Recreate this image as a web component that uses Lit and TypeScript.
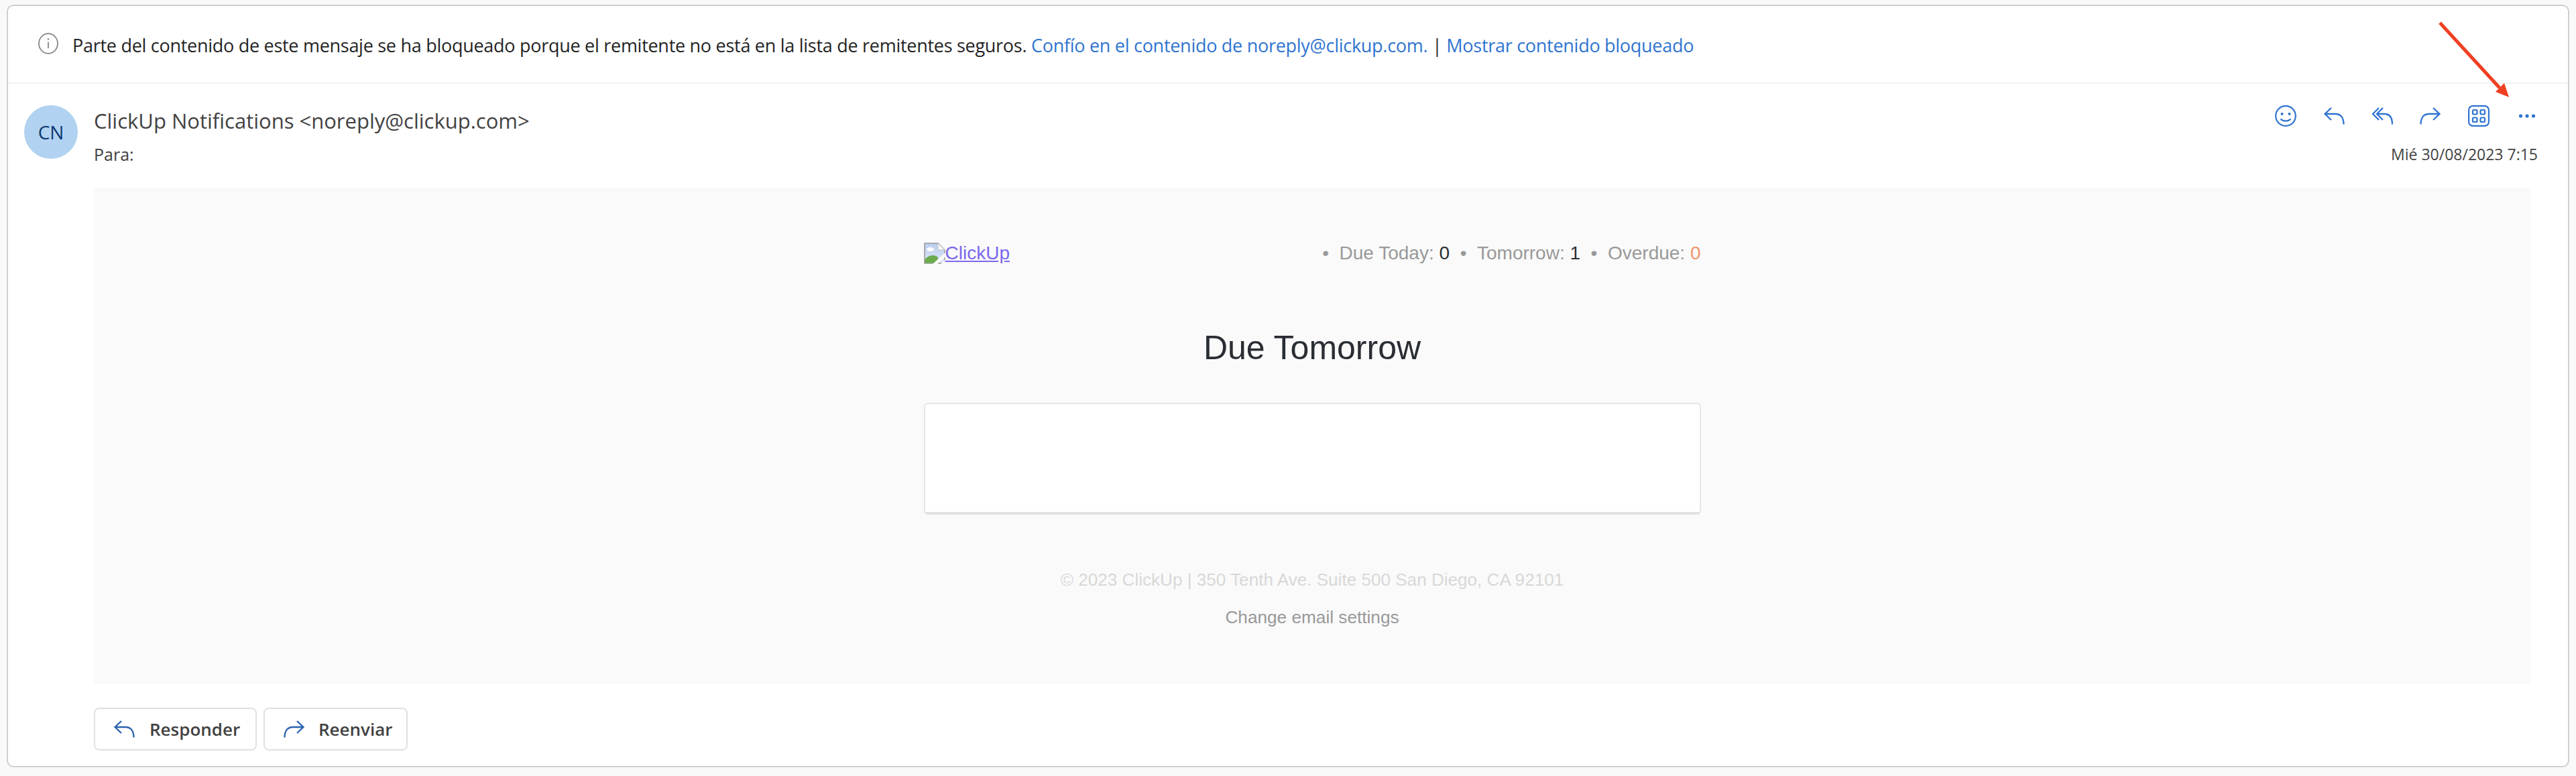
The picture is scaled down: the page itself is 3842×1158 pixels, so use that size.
import { LitElement, html, css, svg } from "lit";
import { customElement } from "lit/decorators.js";

const replyPath = svg`<path d="M12 1 L2.5 10 L12 19 M2.5 10 H18 C25.5 10 30.5 15 30.5 25.5" fill="none" stroke="currentColor" stroke-width="2.3"/>`;
const forwardPath = svg`<path d="M20 1 L29.5 10 L20 19 M29.5 10 H14 C6.5 10 1.5 15 1.5 25.5" fill="none" stroke="currentColor" stroke-width="2.3"/>`;

@customElement("app-root")
export class AppRoot extends LitElement {
  static styles = css`
    :host { display: block; position: relative; width: 3842px; height: 1158px; box-sizing: border-box; padding: 7px 10px 13px 10px; background: #f9f9f9; font-family: "Open Sans", sans-serif; }
    .card { box-sizing: border-box; height: 100%; background: #fff; border: 2px solid #cfcfcf; border-radius: 10px; display: flex; flex-direction: column; }
    .banner { height: 116px; box-sizing: border-box; border-bottom: 2px solid #f0f0f0; display: flex; align-items: center; padding-left: 45px; gap: 21px; font-size: 27px; letter-spacing: -0.28px; color: #242424; white-space: nowrap; flex: none; }
    .banner svg { flex: none; margin-top: -2px; }
    .banner span { margin-top: 3px; }
    .banner a { color: #2f74d0; }
    .head { height: 155px; flex: none; display: flex; padding: 32px 0 0 24px; box-sizing: border-box; }
    .avatar { width: 80px; height: 80px; border-radius: 50%; background: #b1d2f0; color: #0e3a70; display: flex; align-items: center; justify-content: center; font-size: 28px; flex: none; }
    .who { margin-left: 24px; flex: 1; display: flex; flex-direction: column; color: #424242; }
    .sender { font-size: 31px; line-height: 44px; margin-top: 1px; }
    .to { font-size: 25px; line-height: 34px; margin-top: 11px; }
    .side { display: flex; flex-direction: column; align-items: flex-end; margin-right: 45px; }
    .icons { display: flex; align-items: center; gap: 40px; height: 32px; color: #2f74d0; margin-right: 0; }
    .icons svg { display: block; flex: none; }
    .date { font-size: 23px; line-height: 32px; color: #424242; margin-top: 25px; }
    .mail { margin: 0 56px 0 128px; height: 740px; flex: none; background: #fafafa; display: flex; flex-direction: column; align-items: center; font-family: "Liberation Sans", Arial, sans-serif; }
    .inner { width: 1159px; display: flex; flex-direction: column; }
    .top { display: flex; justify-content: space-between; align-items: center; margin-top: 78px; height: 40px; }
    .logo { display: flex; align-items: flex-end; color: #7b68ee; font-size: 28px; line-height: 32px; text-decoration: underline; }
    .stats { font-size: 28px; color: #999; white-space: nowrap; }
    .stats b { font-weight: 400; color: #2a2e34; }
    .stats i { font-style: normal; color: #f0946b; }
    h1 { font-size: 50px; line-height: 60px; font-weight: 400; color: #2a2e34; text-align: center; margin: 91px 0 0; }
    .box { margin-top: 52px; height: 167px; box-sizing: border-box; background: #fff; border: 2px solid #e6e6e6; border-bottom: 4px solid #e2e0e0; border-radius: 6px; }
    .copy { margin-top: 82px; text-align: center; font-size: 26.1px; line-height: 30px; color: #d8d8d8; white-space: nowrap; }
    .settings { margin-top: 26px; text-align: center; font-size: 26.2px; line-height: 30px; color: #999; }
    .actions { display: flex; gap: 10px; padding: 36px 0 0 128px; }
    .btn { height: 64px; box-sizing: border-box; border: 2px solid #e1e1e1; border-radius: 8px; display: flex; align-items: center; font-size: 26px; font-weight: 600; color: #424242; padding-left: 27px; }
    .btn svg { color: #2a62b0; flex: none; }
    .btn.r { width: 243px; gap: 22px; }
    .btn.f { width: 215px; gap: 20px; padding-left: 28px; }
    .arrow { position: absolute; left: 3630px; top: 25px; pointer-events: none; }
  `;

  render() {
    return html`
      <div class="card">
        <div class="banner">
          <svg width="30" height="32" viewBox="0 0 30 32"><ellipse cx="15" cy="16" rx="14" ry="14.8" fill="none" stroke="#808080" stroke-width="1.7"/><path d="M15 13.5V23" stroke="#808080" stroke-width="1.7"/><circle cx="15" cy="9.5" r="1.2" fill="#808080"/></svg>
          <span>Parte del contenido de este mensaje se ha bloqueado porque el remitente no está en la lista de remitentes seguros. <a>Confío en el contenido de noreply@clickup.com.</a> | <a>Mostrar contenido bloqueado</a></span>
        </div>
        <div class="head">
          <div class="avatar">CN</div>
          <div class="who">
            <div class="sender">ClickUp Notifications &lt;noreply@clickup.com&gt;</div>
            <div class="to">Para:</div>
          </div>
          <div class="side">
            <div class="icons">
              <svg width="32" height="32" viewBox="0 0 32 32" fill="none" stroke="currentColor" stroke-width="2.2"><circle cx="16" cy="16" r="14.8"/><circle cx="10.5" cy="13" r="2" fill="currentColor" stroke="none"/><circle cx="21.5" cy="13" r="2" fill="currentColor" stroke="none"/><path d="M8.5 20.5 C12 24.5 20 24.5 23.5 20.5"/></svg>
              <svg width="32" height="26" viewBox="0 0 32 26">${replyPath}</svg>
              <svg width="32" height="26" viewBox="0 0 32 26"><path d="M11 1 L2 10 L11 19 M17 1 L8 10 L17 19 M8 10 H19 C26.5 10 31 15 31 25.5" fill="none" stroke="currentColor" stroke-width="2.3"/></svg>
              <svg width="32" height="26" viewBox="0 0 32 26">${forwardPath}</svg>
              <svg width="32" height="32" viewBox="0 0 32 32" fill="none" stroke="currentColor" stroke-width="2.2"><rect x="1.1" y="1.1" width="29.8" height="29.8" rx="6"/><rect x="7" y="7" width="6.5" height="6.5" rx="1.5"/><rect x="18.5" y="7" width="6.5" height="6.5" rx="1.5"/><rect x="7" y="18.5" width="6.5" height="6.5" rx="1.5"/><rect x="18.5" y="18.5" width="6.5" height="6.5" rx="1.5"/></svg>
              <svg width="32" height="6" viewBox="0 0 32 6" fill="currentColor"><circle cx="6.5" cy="3" r="2.6"/><circle cx="16" cy="3" r="2.6"/><circle cx="25.5" cy="3" r="2.6"/></svg>
            </div>
            <div class="date">Mié 30/08/2023 7:15</div>
          </div>
        </div>
        <div class="mail">
          <div class="inner">
            <div class="top">
              <a class="logo">
                <svg width="32" height="32" viewBox="0 0 32 32">
                  <defs><linearGradient id="sky" x1="0" y1="0" x2="0" y2="1"><stop offset="0" stop-color="#b9cdee"/><stop offset="1" stop-color="#dfe8f7"/></linearGradient></defs>
                  <path d="M1 1H21L31 11V31H1Z" fill="url(#sky)" stroke="#9a9a9a" stroke-width="1.6"/>
                  <path d="M21 1V11H31Z" fill="#fafafa" stroke="#bdbdbd" stroke-width="1"/>
                  <ellipse cx="9.5" cy="10" rx="5.5" ry="3" fill="#fff"/>
                  <path d="M1.5 30.5V25C6 19 14 17 20 21L24 30.5Z" fill="#6bab4c"/>
                  <path d="M33 17 L15 33.5" stroke="#fafafa" stroke-width="5"/>
                  <path d="M24 33 L33 24 V33Z" fill="#fafafa"/>
                </svg>ClickUp
              </a>
              <div class="stats">• &nbsp;Due Today: <b>0</b> &nbsp;• &nbsp;Tomorrow: <b>1</b> &nbsp;• &nbsp;Overdue: <i>0</i></div>
            </div>
            <h1>Due Tomorrow</h1>
            <div class="box"></div>
            <div class="copy">© 2023 ClickUp | 350 Tenth Ave. Suite 500 San Diego, CA 92101</div>
            <div class="settings">Change email settings</div>
          </div>
        </div>
        <div class="actions">
          <div class="btn r"><svg width="32" height="26" viewBox="0 0 32 26">${replyPath}</svg>Responder</div>
          <div class="btn f"><svg width="32" height="26" viewBox="0 0 32 26">${forwardPath}</svg>Reenviar</div>
        </div>
      </div>
      <svg class="arrow" width="120" height="130" viewBox="0 0 120 130"><path d="M9 9 L98 106" stroke="#ee4023" stroke-width="5" fill="none"/><path d="M112 120 L92 112 L105 99 Z" fill="#ee4023"/></svg>
    `;
  }
}
